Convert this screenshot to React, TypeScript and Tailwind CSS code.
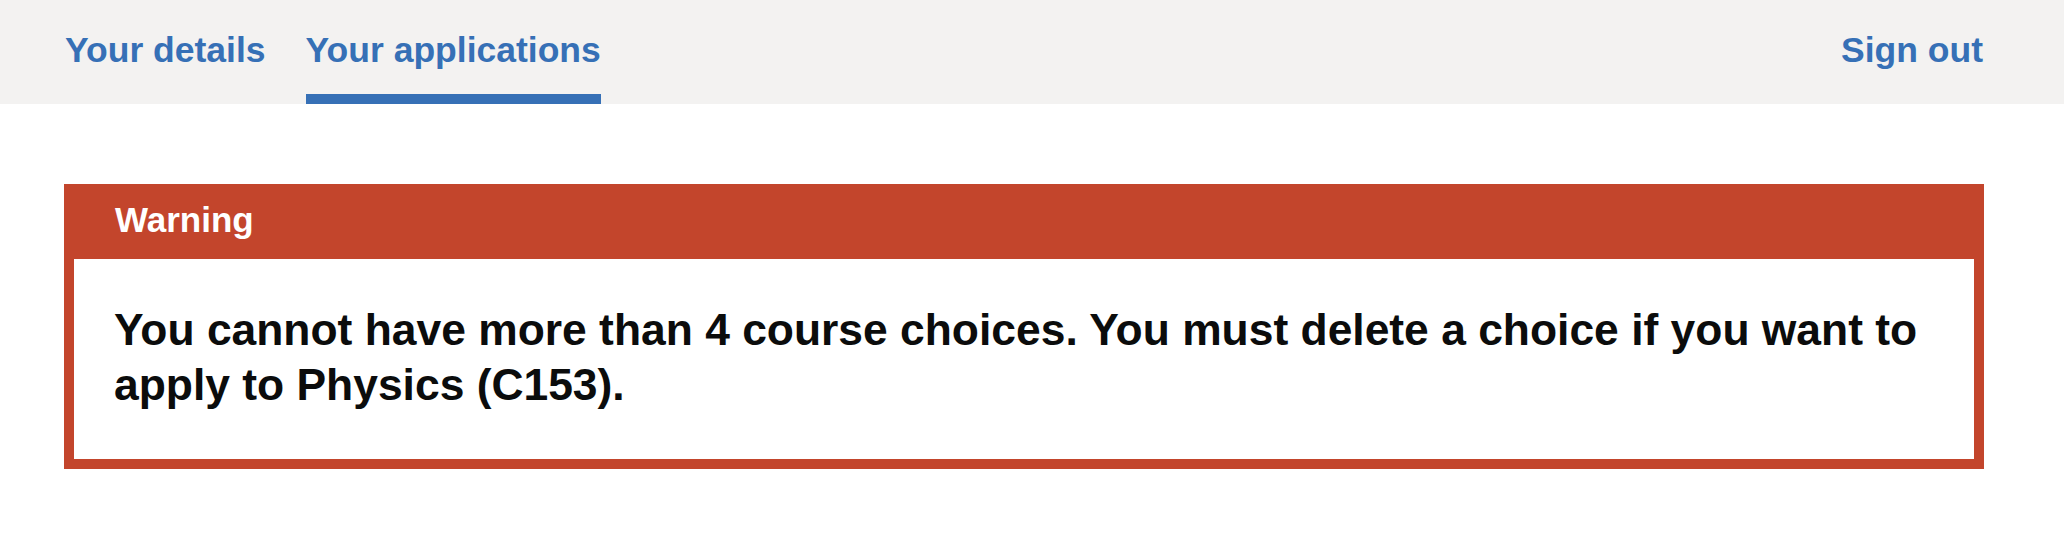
const links = [
  { href: "#details", label: "Your details", active: false },
  { href: "#applications", label: "Your applications", active: true },
];

const App = () => {
  return (
    <div className="min-h-[536px] bg-white font-['Liberation_Sans',Arial,sans-serif] font-bold">
      {/* Primary navigation */}
      <header className="flex h-[104px] items-start justify-between bg-[#f3f2f1] pl-[65px] pr-[81px]">
        <nav className="flex gap-[40px]">
          {links.map((link) => (
            <a
              key={link.href}
              href={link.href}
              className={`block border-b-[10px] pt-[27px] pb-[21px] text-[35.5px] leading-[46px] text-[#3670b6] ${
                link.active ? "border-[#3670b6]" : "border-transparent"
              }`}
            >
              {link.label}
            </a>
          ))}
        </nav>
        <a href="#sign-out" className="block pt-[27px] text-[35.5px] leading-[46px] text-[#3670b6]">
          Sign out
        </a>
      </header>

      <main className="pl-[64px] pr-[80px] pt-[80px]">
        {/* Warning panel */}
        <div className="border-[10px] border-t-0 border-[#c3452c]">
          <div className="bg-[#c3452c] pl-[41px] pt-[15px] pb-[19px] text-[35px] leading-[41px] text-white">
            Warning
          </div>
          <p className="pl-[40px] pr-[40px] pt-[43px] pb-[47px] text-[44.4px] leading-[55px] text-[#0b0c0c]">
            You cannot have more than 4 course choices. You must delete a choice if you want to apply to Physics (C153).
          </p>
        </div>
      </main>
    </div>
  );
};

export default App;
